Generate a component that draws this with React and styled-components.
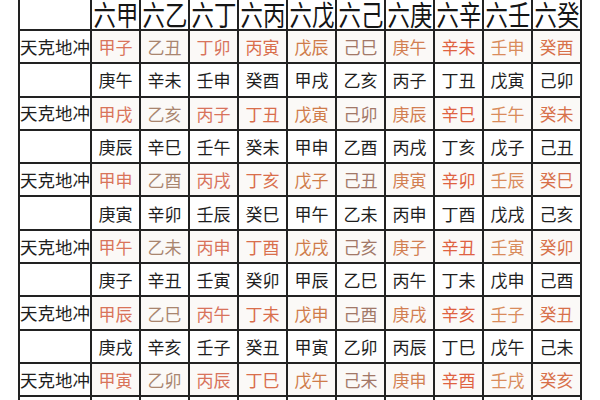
import React from 'react';
import styled, { createGlobalStyle } from 'styled-components';

const GlobalStyle = createGlobalStyle`
  html, body {
    margin: 0;
    padding: 0;
    background: #ffffff;
  }
`;

const Page = styled.div`
  width: 600px;
  height: 400px;
  overflow: hidden;
  padding-left: 18px;
  box-sizing: border-box;
  font-family: 'Noto Sans CJK SC', 'Noto Sans', sans-serif;
`;

const Grid = styled.div`
  display: grid;
  grid-template-columns: 70px repeat(10, 47px);
  grid-template-rows: 33px repeat(12, 31.3px);
  gap: 2px;
  padding: 2px;
  margin-top: -6px;
  width: max-content;
  background: #222;
`;

const HeadCell = styled.div`
  display: flex;
  align-items: center;
  justify-content: center;
  background: #fff;
  color: #151515;
  overflow: hidden;
`;

// the heading glyphs are tall and narrow in the picture
const HeadText = styled.span`
  display: inline-block;
  font-size: 28px;
  line-height: 1;
  white-space: nowrap;
  transform: translateY(1px) scaleX(0.8);
`;

const Cell = styled.div`
  display: flex;
  align-items: center;
  justify-content: center;
  background: ${({ $marked }) => ($marked ? '#fbf9f7' : '#fff')};
  color: ${({ $tone }) => $tone || '#1e1e1e'};
  font-size: ${({ $label }) => ($label ? '17.5px' : '17px')};
  line-height: 1;
  white-space: nowrap;
  overflow: hidden;
`;

const heads = ['六甲', '六乙', '六丁', '六丙', '六戊', '六己', '六庚', '六辛', '六壬', '六癸'];

// colours of the marked rows, one per column
const tones = [
  '#d9745a',
  '#a9856f',
  '#d8735c',
  '#d96e4c',
  '#cf7c4a',
  '#a27868',
  '#d27f52',
  '#df6241',
  '#d98c5c',
  '#d7704a',
];

const rows = [
  ['甲子', '乙丑', '丁卯', '丙寅', '戊辰', '己巳', '庚午', '辛未', '壬申', '癸酉'],
  ['庚午', '辛未', '壬申', '癸酉', '甲戌', '乙亥', '丙子', '丁丑', '戊寅', '己卯'],
  ['甲戌', '乙亥', '丙子', '丁丑', '戊寅', '己卯', '庚辰', '辛巳', '壬午', '癸未'],
  ['庚辰', '辛巳', '壬午', '癸未', '甲申', '乙酉', '丙戌', '丁亥', '戊子', '己丑'],
  ['甲申', '乙酉', '丙戌', '丁亥', '戊子', '己丑', '庚寅', '辛卯', '壬辰', '癸巳'],
  ['庚寅', '辛卯', '壬辰', '癸巳', '甲午', '乙未', '丙申', '丁酉', '戊戌', '己亥'],
  ['甲午', '乙未', '丙申', '丁酉', '戊戌', '己亥', '庚子', '辛丑', '壬寅', '癸卯'],
  ['庚子', '辛丑', '壬寅', '癸卯', '甲辰', '乙巳', '丙午', '丁未', '戊申', '己酉'],
  ['甲辰', '乙巳', '丙午', '丁未', '戊申', '己酉', '庚戌', '辛亥', '壬子', '癸丑'],
  ['庚戌', '辛亥', '壬子', '癸丑', '甲寅', '乙卯', '丙辰', '丁巳', '戊午', '己未'],
  ['甲寅', '乙卯', '丙辰', '丁巳', '戊午', '己未', '庚申', '辛酉', '壬戌', '癸亥'],
  ['庚申', '辛酉', '壬戌', '癸亥', '甲子', '乙丑', '丙寅', '丁卯', '戊辰', '己巳'],
];

const App = () => (
  <>
    <GlobalStyle />
    <Page>
      <Grid>
        <HeadCell />
        {heads.map((h) => (
          <HeadCell key={h}>
            <HeadText>{h}</HeadText>
          </HeadCell>
        ))}
        {rows.map((row, r) => {
          const marked = r % 2 === 0;
          return (
            <React.Fragment key={r}>
              <Cell $label>{marked ? '天克地冲' : ''}</Cell>
              {row.map((v, c) => (
                <Cell key={c} $marked={marked} $tone={marked ? tones[c] : null}>
                  {v}
                </Cell>
              ))}
            </React.Fragment>
          );
        })}
      </Grid>
    </Page>
  </>
);

export default App;
